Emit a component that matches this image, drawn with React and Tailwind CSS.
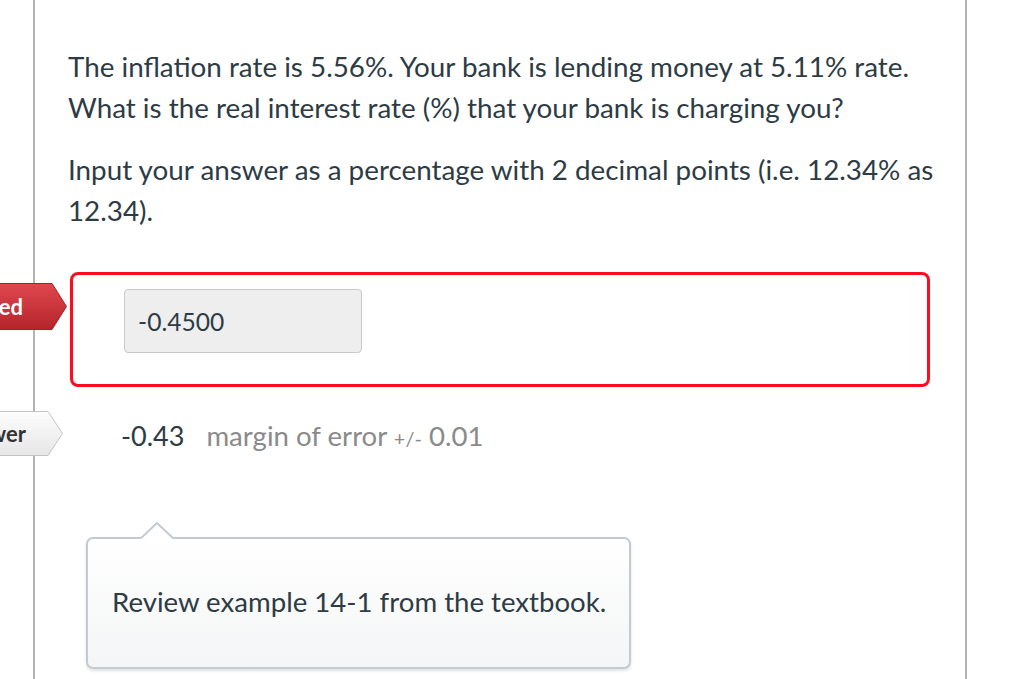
import React from "react";

function Tag({ text, red, width = 200, height = 47, textPr }) {
  const tip = 15;
  const d = `M0.5 0.5 H${width - tip} L${width - 0.5} ${height / 2} L${width - tip} ${height - 0.5} H0.5 Z`;
  const gid = red ? "gRed" : "gGray";
  return (
    <div className="relative" style={{ width, height }}>
      <svg className="absolute inset-0" width={width} height={height}>
        <defs>
          <linearGradient id={gid} x1="0" y1="0" x2="0" y2="1">
            {red ? (
              <>
                <stop offset="0" stopColor="#e0474d" />
                <stop offset="1" stopColor="#b3252b" />
              </>
            ) : (
              <>
                <stop offset="0" stopColor="#fdfdfd" />
                <stop offset="1" stopColor="#e6e6e6" />
              </>
            )}
          </linearGradient>
        </defs>
        <path d={d} fill={`url(#${gid})`} stroke={red ? "#a51f25" : "#c4c4c4"} strokeWidth="1" />
      </svg>
      <div
        className={`relative h-full flex items-center justify-end font-bold text-[22px] ${red ? "text-white" : "text-[#333333]"}`}
        style={{ paddingRight: textPr }}
      >
        {text}
      </div>
    </div>
  );
}

export default function App() {
  return (
    <div className="w-[1024px] h-[679px] overflow-hidden bg-white relative font-['Lato','Liberation_Sans',sans-serif] text-[#2d3b45]">
      <div className="ml-[33px] w-[934px] h-full border-x-2 border-[#b4b4b4] pl-[33px] pr-[35px] pt-[46px]">
        <p className="text-[27.8px] leading-[41px] whitespace-nowrap">
          The inflation rate is 5.56%. Your bank is lending money at 5.11% rate.
          <br />
          What is the real interest rate (%) that your bank is charging you?
        </p>
        <p className="mt-[21px] text-[27.8px] leading-[41px] whitespace-nowrap">
          Input your answer as a percentage with 2 decimal points (i.e. 12.34% as
          <br />
          12.34).
        </p>

        <div className="relative ml-[2px] mt-[41px] h-[115px] rounded-[8px] border-[3px] border-[#ff0a1e] pl-[51px] pt-[14px]">
          <div className="absolute right-full mr-[6px] top-[8px]">
            <Tag text="You Answered" red width={200} height={47} textPr={44} />
          </div>
          <div className="w-[238px] h-[64px] rounded-[4px] border border-[#c9c9c9] bg-[#eeeeee] flex items-center pl-[13px] pt-[2px] text-[24.6px]">
            -0.4500
          </div>
        </div>

        <div className="relative ml-[3px] mt-[25px] h-[48px] flex items-center pl-[50px]">
          <div className="absolute right-full mr-[8px] top-[-1px]">
            <Tag text="Correct Answer" width={200} height={45} textPr={37} />
          </div>
          <span className="text-[27px]">-0.43</span>
          <span className="ml-[22px] text-[27.6px] text-[#8a8a8a]">
            margin of error <span className="text-[20px]">+/-</span> 0.01
          </span>
        </div>

        <div className="relative ml-[18px] mt-[77px] w-[545px] h-[132px] rounded-[7px] border-2 border-[#c3cad0] bg-gradient-to-b from-white to-[#f4f5f6] shadow-[0_2px_3px_rgba(0,0,0,0.12)] flex items-center pl-[24px]">
          <svg className="absolute left-[52px] top-[-17px]" width="34" height="18" viewBox="0 0 34 18">
            <path d="M0 17 L17 1 L34 17" fill="#ffffff" stroke="#c3cad0" strokeWidth="2" />
            <rect x="0" y="16.9" width="34" height="2" fill="#ffffff" />
          </svg>
          <span className="text-[27.6px] -mt-[2px]">Review example 14-1 from the textbook.</span>
        </div>
      </div>
    </div>
  );
}
